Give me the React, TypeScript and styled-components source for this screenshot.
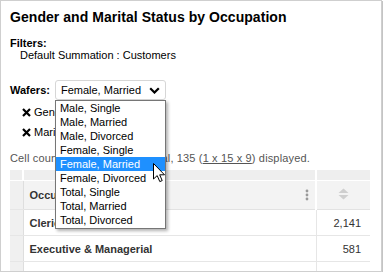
import * as React from 'react';
import styled, { createGlobalStyle } from 'styled-components';

const GlobalStyle = createGlobalStyle`
  html, body {
    margin: 0;
    padding: 0;
    background: #fff;
  }
  body {
    font-family: "Liberation Sans", Arial, sans-serif;
    color: #000;
  }
`;

const Frame = styled.div`
  position: relative;
  box-sizing: border-box;
  width: 382px;
  height: 272px;
  border: 1px solid #cfcfcf;
  box-shadow: 1px 1px 0 #c4c4c4;
  padding: 8px 10px 0 9px;
  overflow: hidden;
`;

const Title = styled.h1`
  margin: 0;
  font-size: 14px;
  line-height: 17px;
  font-weight: bold;
  letter-spacing: 0.05px;
`;

const FilterBlock = styled.div`
  margin-top: 11px;
  font-size: 11px;
  line-height: 12px;
`;

const Label = styled.div`
  font-weight: bold;
`;

const FilterValue = styled.div`
  padding-left: 10px;
`;

const WaferRow = styled.div`
  display: flex;
  align-items: center;
  gap: 5px;
  margin-top: 19px;
  font-size: 11px;
`;

const SelectWrap = styled.div`
  position: relative;
`;

const SelectBox = styled.div`
  box-sizing: border-box;
  width: 111px;
  height: 20px;
  display: flex;
  align-items: center;
  justify-content: space-between;
  padding: 0 5px 0 5px;
  border: 1px solid #d6d6d6;
  border-radius: 3px;
  background: #fff;
  font-size: 11px;
`;

const DropList = styled.ul`
  position: absolute;
  top: 20px;
  left: 0;
  z-index: 5;
  box-sizing: border-box;
  width: 111px;
  margin: 0;
  padding: 0 0 1px;
  list-style: none;
  background: #fff;
  border: 1px solid #767676;
  box-shadow: 2px 2px 3px rgba(0, 0, 0, 0.3);
`;

const DropItem = styled.li<{ $active?: boolean }>`
  height: 14px;
  line-height: 14px;
  padding-left: 4px;
  font-size: 11px;
  color: ${(p) => (p.$active ? '#fff' : '#000')};
  background: ${(p) => (p.$active ? '#1e90ff' : 'transparent')};
`;

const Chips = styled.div`
  display: flex;
  flex-direction: column;
  gap: 6px;
  margin-top: 5px;
  padding-left: 12px;
  font-size: 11px;
  line-height: 14px;
`;

const Chip = styled.div`
  display: flex;
  align-items: center;
  gap: 3px;
`;

const CountLine = styled.div`
  margin-top: 13px;
  font-size: 11px;
  line-height: 13px;
  letter-spacing: 0.15px;
  color: #555;
`;

const DimLink = styled.span`
  text-decoration: underline;
`;

const Grid = styled.table`
  margin-top: 5px;
  width: 360px;
  border-collapse: collapse;
  table-layout: fixed;
  font-size: 11px;
  color: #333;
`;

const BandCell = styled.td`
  height: 10px;
  padding: 0;
  background: #eeeeee;
  border-right: 2px solid #fff;
  border-bottom: 1px solid #fff;
  &:last-child {
    border-right: none;
  }
`;

const Gutter = styled.td`
  padding: 0;
  background: #f0f0f0;
  border-right: 1px solid #dedede;
  border-bottom: 1px solid #e6e6e6;
`;

const HeadCell = styled.th<{ $right?: boolean }>`
  position: relative;
  height: 28px;
  padding: 0 6px;
  background: #f3f3f3;
  text-align: ${(p) => (p.$right ? 'center' : 'left')};
  font-weight: bold;
  border-bottom: 1px solid #e2e2e2;
  border-right: ${(p) => (p.$right ? 'none' : '2px solid #fff')};
`;

const HeadInner = styled.div`
  display: flex;
  align-items: center;
  justify-content: space-between;
`;

const RowLabel = styled.td`
  height: 25px;
  padding: 0 6px;
  font-weight: bold;
  white-space: nowrap;
  overflow: hidden;
  border-bottom: 1px solid #e6e6e6;
  border-right: 1px solid #e6e6e6;
`;

const RowValue = styled.td`
  padding: 0 9px 0 0;
  text-align: right;
  border-bottom: 1px solid #e6e6e6;
`;

const Cursor = styled.svg`
  position: absolute;
  left: 152px;
  top: 162px;
  z-index: 10;
`;

const options = [
  'Male, Single',
  'Male, Married',
  'Male, Divorced',
  'Female, Single',
  'Female, Married',
  'Female, Divorced',
  'Total, Single',
  'Total, Married',
  'Total, Divorced',
];

const rows = [
  { label: 'Clerical', value: '2,141' },
  { label: 'Executive & Managerial', value: '581' },
  { label: 'Home Duties', value: '16,593' },
];

const Cross = () => (
  <svg width="9" height="9" viewBox="0 0 9 9">
    <path d="M1,1 L8,8 M8,1 L1,8" stroke="#000" strokeWidth="2.2" />
  </svg>
);

export default function App() {
  return (
    <>
      <GlobalStyle />
      <Frame>
        <Title>Gender and Marital Status by Occupation</Title>
        <FilterBlock>
          <Label>Filters:</Label>
          <FilterValue>Default Summation : Customers</FilterValue>
        </FilterBlock>
        <WaferRow>
          <Label>Wafers:</Label>
          <SelectWrap>
            <SelectBox>
              <span>Female, Married</span>
              <svg width="11" height="7" viewBox="0 0 11 7">
                <path d="M1.2,1.2 L5.5,5.5 L9.8,1.2" fill="none" stroke="#000" strokeWidth="2.2" />
              </svg>
            </SelectBox>
            <DropList>
              {options.map((o) => (
                <DropItem key={o} $active={o === 'Female, Married'}>
                  {o}
                </DropItem>
              ))}
            </DropList>
          </SelectWrap>
        </WaferRow>
        <Chips>
          <Chip>
            <Cross />
            <span>Gender</span>
          </Chip>
          <Chip>
            <Cross />
            <span>Marital Status</span>
          </Chip>
        </Chips>
        <CountLine>
          Cell count: 135 (1 x 15 x 9) total, 135 (<DimLink>1 x 15 x 9</DimLink>) displayed.
        </CountLine>
        <Grid>
          <colgroup>
            <col style={{ width: 13 }} />
            <col style={{ width: 293 }} />
            <col style={{ width: 54 }} />
          </colgroup>
          <tbody>
            <tr>
              <BandCell />
              <BandCell />
              <BandCell />
            </tr>
            <tr>
              <Gutter />
              <HeadCell>
                <HeadInner>
                  <span>Occupation</span>
                  <svg width="4" height="12" viewBox="0 0 4 12">
                    <circle cx="2" cy="2" r="1.4" fill="#9a9a9a" />
                    <circle cx="2" cy="6" r="1.4" fill="#9a9a9a" />
                    <circle cx="2" cy="10" r="1.4" fill="#9a9a9a" />
                  </svg>
                </HeadInner>
              </HeadCell>
              <HeadCell $right>
                <svg width="11" height="12" viewBox="0 0 11 12">
                  <path d="M5.5,0.5 L10.5,5 L0.5,5 Z" fill="#cfcfcf" />
                  <path d="M5.5,11.5 L10.5,7 L0.5,7 Z" fill="#cfcfcf" />
                </svg>
              </HeadCell>
            </tr>
            {rows.map((r) => (
              <tr key={r.label}>
                <Gutter />
                <RowLabel>{r.label}</RowLabel>
                <RowValue>{r.value}</RowValue>
              </tr>
            ))}
          </tbody>
        </Grid>
        <Cursor width="13" height="20" viewBox="0 0 13 20">
          <path
            d="M0.5,0.5 L0.5,16 L4.2,12.6 L6.8,18.6 L9.2,17.6 L6.7,11.8 L11.5,11.8 Z"
            fill="#fff"
            stroke="#000"
            strokeWidth="1"
            strokeLinejoin="round"
          />
        </Cursor>
      </Frame>
    </>
  );
}
